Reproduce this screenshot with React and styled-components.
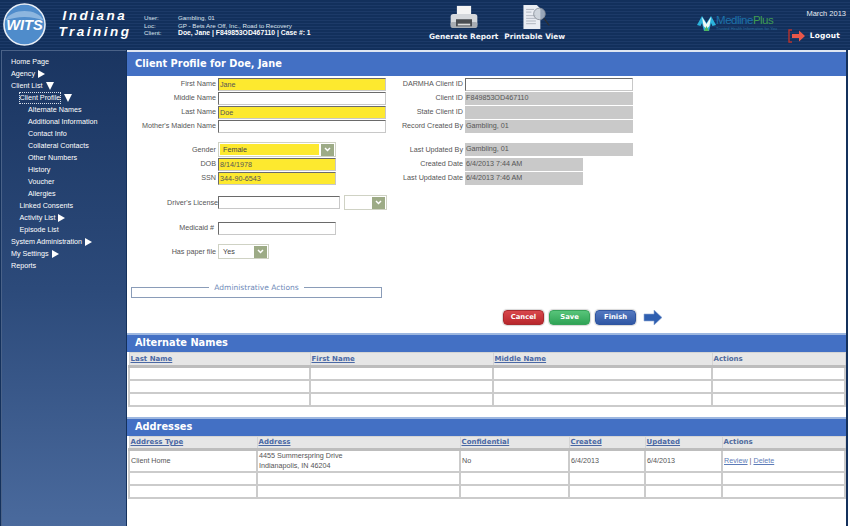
import React from "react";
import styled, { createGlobalStyle } from "styled-components";

const GlobalStyle = createGlobalStyle`
  html, body {
    margin: 0;
    padding: 0;
    height: 100%;
    background: #fff;
    font-family: "Liberation Sans", Arial, sans-serif;
    overflow: hidden;
  }
  * { box-sizing: border-box; }
`;

const Page = styled.div`
  width: 850px;
  height: 526px;
  display: flex;
  flex-direction: column;
  background: #14315c;
  overflow: hidden;
`;

const Header = styled.header`
  height: 50px;
  flex: none;
  display: flex;
  align-items: flex-start;
  background: repeating-linear-gradient(180deg, #12305c 0 2px, #1c3a68 2px 3px);
  color: #fff;
`;

const Logo = styled.svg`
  width: 43px;
  height: 43px;
  margin: 3px 0 0 3px;
  flex: none;
`;

const Brand = styled.div`
  width: 74px;
  margin: 8px 0 0 12px;
  flex: none;
  font: italic bold 13.5px/16px "Liberation Sans", Arial, sans-serif;
  letter-spacing: 2.5px;
  text-align: center;
`;

const Info = styled.div`
  width: 270px;
  margin: 14px 0 0 12px;
  flex: none;
  display: grid;
  grid-template-columns: 34px 1fr;
  font: 6.2px/7.5px "Liberation Sans", Arial, sans-serif;
  color: #dfe6f0;
`;

const InfoStrong = styled.span`
  font-size: 6.8px;
  font-weight: bold;
  color: #fff;
`;

const Tools = styled.div`
  margin: 5px 0 0 15px;
  display: flex;
  gap: 6px;
  flex: none;
`;

const Tool = styled.div`
  display: flex;
  flex-direction: column;
  align-items: center;
  font: bold 7.4px/10px "DejaVu Sans", sans-serif;
  color: #f2f4f8;
  white-space: nowrap;
`;

const ToolIcon = styled.svg`
  width: 30px;
  height: 24px;
  margin-bottom: 3px;
`;

const Medline = styled.div`
  margin: 14px 0 0 132px;
  display: flex;
  align-items: flex-start;
  flex: none;
`;

const MedlineMark = styled.svg`
  width: 19px;
  height: 18px;
`;

const MedlineWords = styled.div`
  font: 11.5px/12px "Liberation Sans", Arial, sans-serif;
  letter-spacing: -0.5px;
  color: #1d72aa;
`;

const MedlinePlus = styled.span`
  color: #3f9c50;
`;

const MedlineSub = styled.div`
  font-size: 4px;
  line-height: 5px;
  letter-spacing: 0;
  color: #2a6c9c;
`;

const Account = styled.div`
  margin: 9px 0 0 auto;
  padding-right: 4px;
  display: flex;
  flex-direction: column;
  align-items: flex-end;
  gap: 11px;
`;

const MonthLabel = styled.div`
  font: 7.5px/9px "Liberation Sans", Arial, sans-serif;
  color: #e6ebf2;
`;

const Logout = styled.div`
  display: flex;
  align-items: center;
  gap: 4px;
  padding-right: 6px;
  font: bold 7.4px/10px "DejaVu Sans", sans-serif;
  letter-spacing: 0.2px;
`;

const Body = styled.div`
  flex: 1;
  display: flex;
  min-height: 0;
`;

const Sidebar = styled.nav`
  width: 125px;
  flex: none;
  padding: 5px 0 0 9px;
  border-top: 1px solid #4a6288;
  border-left: 1px solid #4a6288;
  margin-left: 1px;
  background: linear-gradient(180deg, #1a3561 0%, #2c4a7a 50%, #4a6a9d 100%);
  color: #fff;
  font: 7.2px/12px "Liberation Sans", Arial, sans-serif;
`;

const NavItem = styled.div`
  height: 12px;
  display: flex;
  align-items: center;
  gap: 3px;
  padding-left: ${(p) => p.$level * 8.5}px;
  white-space: nowrap;
`;

const NavFocus = styled.span`
  border: 1px dotted #d8e0ea;
  line-height: 10px;
  margin-left: -1px;
`;

const ArrowRight = styled.i`
  width: 0;
  height: 0;
  border-top: 4px solid transparent;
  border-bottom: 4px solid transparent;
  border-left: 7px solid #fff;
`;

const ArrowDown = styled.i`
  width: 0;
  height: 0;
  border-left: 4px solid transparent;
  border-right: 4px solid transparent;
  border-top: 8px solid #fff;
`;

const Main = styled.main`
  width: 719px;
  margin-left: 1px;
  flex: none;
  background: #fff;
  border-top: 2px solid #dfe6f2;
  display: flex;
  flex-direction: column;
`;

const SectionBar = styled.h2`
  margin: 0;
  height: ${(p) => p.$h}px;
  padding: 0 0 1px 8px;
  display: flex;
  align-items: center;
  background: #4370c4;
  border-top: 2px solid #9db7e0;
  color: #fff;
  font: bold 9.8px/14px "DejaVu Sans", sans-serif;
`;

const TitleBar = styled(SectionBar)`
  border-top: 0;
`;

const Form = styled.div`
  display: grid;
  grid-template-columns: 259px 1fr;
  padding-top: 1px;
`;

const Column = styled.div`
  display: flex;
  flex-direction: column;
`;

const Row = styled.div`
  height: ${(p) => p.$h || 14}px;
  margin-top: ${(p) => p.$gap || 0}px;
  display: flex;
  align-items: center;
  gap: ${(p) => (p.$tight ? 0 : 2)}px;
  font: 7.2px/10px "Liberation Sans", Arial, sans-serif;
  color: #555;
`;

const Label = styled.label`
  width: ${(p) => p.$w}px;
  flex: none;
  text-align: right;
  white-space: nowrap;
`;

const Field = styled.div`
  width: ${(p) => p.$w || 168}px;
  height: 13px;
  flex: none;
  margin-left: ${(p) => p.$ml || 0}px;
  padding-left: 1px;
  line-height: 12px;
  font-size: 7.2px;
  color: #555;
  background: ${(p) => (p.$fill === "yellow" ? "#fde92f" : p.$fill === "grey" ? "#c9c9c9" : "#fff")};
  border: ${(p) => (p.$fill === "grey" ? "0" : "1px solid")};
  border-color: #6a6a6a #c8c8c8 #c8c8c8 #6a6a6a;
`;

const Select = styled.div`
  width: ${(p) => p.$w}px;
  height: ${(p) => p.$h || 15}px;
  flex: none;
  margin-left: ${(p) => p.$ml || 0}px;
  padding: 1px;
  display: flex;
  align-items: center;
  background: #fff;
  border: 1px solid #cfd2c4;
  font-size: 7.2px;
  color: #444;
`;

const SelectText = styled.span`
  flex: 1;
  height: 100%;
  padding-left: 3px;
  line-height: 11px;
  background: ${(p) => (p.$yellow ? "#fde92f" : "transparent")};
`;

const SelectButton = styled.span`
  width: 13px;
  height: 12px;
  flex: none;
  display: flex;
  align-items: center;
  justify-content: center;
  margin-left: 2px;
  background: #9dab86;
`;

const Chevron = styled.svg`
  width: 7px;
  height: 5px;
`;

const Fieldset = styled.fieldset`
  width: 251px;
  height: 15px;
  margin: 24px 0 0 4px;
  padding: 0;
  border: 1px solid #8a9cb8;
  min-width: 0;
`;

const Legend = styled.legend`
  margin: 0 auto;
  padding: 0 5px;
  font: 7.5px/9px "DejaVu Sans", sans-serif;
  color: #6f8ab8;
`;

const Actions = styled.div`
  height: 16px;
  margin-top: 11px;
  padding-left: 376px;
  display: flex;
  align-items: center;
  gap: 5px;
`;

const Btn = styled.button`
  width: 41px;
  height: 15px;
  padding: 0;
  border: 1px solid ${(p) => p.$edge};
  border-radius: 4px;
  background: linear-gradient(180deg, ${(p) => p.$light}, ${(p) => p.$color});
  box-shadow: 0 0 1px 1px #d8d8d8;
  color: #fff;
  font: bold 6.8px/12px "DejaVu Sans", sans-serif;
`;

const NextArrow = styled.svg`
  width: 20px;
  height: 15px;
  margin-left: 2px;
`;

const Section = styled.section`
  margin-top: ${(p) => p.$gap}px;
`;

const Table = styled.table`
  width: 718px;
  margin-left: 1px;
  border-collapse: collapse;
  table-layout: fixed;
`;

const Col = styled.col`
  width: ${(p) => (p.$w ? `${p.$w}px` : "auto")};
`;

const Th = styled.th`
  height: ${(p) => p.$h || 13}px;
  padding: 1px 0 0 1px;
  background: #e6e6e6;
  border: 1px solid #d4d4d4;
  border-bottom: 3px solid #bdbdbd;
  text-align: left;
  font: bold 7px/9px "DejaVu Sans", sans-serif;
  color: #4f6a9c;
`;

const HeadLink = styled.a`
  text-decoration: underline;
  color: #4a68a4;
`;

const Td = styled.td`
  height: ${(p) => p.$h || 13}px;
  padding: 0 0 0 1px;
  border: 2px solid #cbcbcb;
  font: 7.2px/10px "Liberation Sans", Arial, sans-serif;
  color: #555;
`;

const CellLink = styled.a`
  text-decoration: underline;
  color: #5d7cb8;
`;

const Rule = styled.div`
  width: 5px;
  flex: none;
  background: #fff;
  border-left: 2px solid #14315c;
`;

const Gap = styled.div`
  flex: 1;
  background: #fff;
`;

const NAV = [
  { t: "Home Page", l: 0 },
  { t: "Agency", l: 0, a: "r" },
  { t: "Client List", l: 0, a: "d" },
  { t: "Client Profile", l: 1, a: "d", focus: true },
  { t: "Alternate Names", l: 2 },
  { t: "Additional Information", l: 2 },
  { t: "Contact Info", l: 2 },
  { t: "Collateral Contacts", l: 2 },
  { t: "Other Numbers", l: 2 },
  { t: "History", l: 2 },
  { t: "Voucher", l: 2 },
  { t: "Allergies", l: 2 },
  { t: "Linked Consents", l: 1 },
  { t: "Activity List", l: 1, a: "r" },
  { t: "Episode List", l: 1 },
  { t: "System Administration", l: 0, a: "r" },
  { t: "My Settings", l: 0, a: "r" },
  { t: "Reports", l: 0 },
];

const ChevronIcon = () => (
  <Chevron viewBox="0 0 7 5">
    <path d="M1 1l2.5 2.5L6 1" fill="none" stroke="#fff" strokeWidth="1.5" />
  </Chevron>
);

function EmptyRows({ cols, rows }) {
  return Array.from({ length: rows }).map((_, r) => (
    <tr key={r}>
      {Array.from({ length: cols }).map((_, c) => (
        <Td key={c} />
      ))}
    </tr>
  ));
}

export default function App() {
  return (
    <Page>
      <GlobalStyle />
      <Header>
        <Logo viewBox="0 0 44 44">
          <circle cx="22" cy="22" r="21" fill="#4f8ccb" stroke="#e8eef6" strokeWidth="1.6" />
          <path d="M2.500 18C8 5 36 5 41.500 18C30 13 14 13 2.500 18Z" fill="#8db6df" />
          <text x="22" y="28" textAnchor="middle" fill="#fff" fontFamily="Liberation Sans" fontStyle="italic" fontWeight="bold" fontSize="15">WITS</text>
        </Logo>
        <Brand>
          Indiana
          <br />
          Training
        </Brand>
        <Info>
          <span>User:</span>
          <span>Gambling, 01</span>
          <span>Loc:</span>
          <span>GP - Bets Are Off, Inc., Road to Recovery</span>
          <span>Client:</span>
          <InfoStrong>Doe, Jane | F849853OD467110 | Case #: 1</InfoStrong>
        </Info>
        <Tools>
          <Tool>
            <ToolIcon viewBox="0 0 32 27">
              <rect x="8" y="1" width="16" height="10" fill="#f4f4f4" />
              <path d="M4 10h24a3 3 0 0 1 3 3v10H1V13a3 3 0 0 1 3-3z" fill="#d5d8dc" />
              <rect x="1" y="19" width="30" height="7" rx="2" fill="#a9adb3" />
              <rect x="7" y="16" width="18" height="8" fill="#4a4d52" />
              <rect x="9" y="21" width="14" height="2" fill="#dcdcdc" />
            </ToolIcon>
            Generate Report
          </Tool>
          <Tool>
            <ToolIcon viewBox="0 0 32 27">
              <path d="M3 0h15l4 4v23H3z" fill="#e9edf3" />
              <path d="M6 5h9M6 8h6M6 12h11M6 15h11M6 18h11M6 21h11" stroke="#a9b0ba" strokeWidth="1" />
              <circle cx="21" cy="10" r="6.500" fill="#c4ccd6" fillOpacity="0.75" stroke="#8b929c" />
              <path d="M26 15l6 8" stroke="#2c2f34" strokeWidth="1.4" />
            </ToolIcon>
            Printable View
          </Tool>
        </Tools>
        <Medline>
          <MedlineMark viewBox="0 0 19 18">
            <path d="M0 11L5 2l4.500 7L14 2l5 9-3.500 1L14 9l-2 8H7L5 9l-1.500 3z" fill="#2bb3dc" />
            <path d="M5 3l4.500 7L14 3l-1.500 9-3 3-3-3z" fill="#eef7f6" />
            <path d="M7 17l2.500-5 2.500 5z" fill="#4fb55a" />
          </MedlineMark>
          <MedlineWords>
            Medline<MedlinePlus>Plus</MedlinePlus>
            <MedlineSub>Trusted Health Information for You</MedlineSub>
          </MedlineWords>
        </Medline>
        <Account>
          <MonthLabel>March 2013</MonthLabel>
          <Logout>
            <svg width="18" height="14" viewBox="0 0 18 14">
              <path d="M4 1H1v12h3" fill="none" stroke="#b8322c" strokeWidth="1.4" />
              <path d="M4 5h7V1.500l6 5.500-6 5.500V9H4z" fill="#e8574a" />
            </svg>
            Logout
          </Logout>
        </Account>
      </Header>
      <Body>
        <Sidebar>
          {NAV.map((n) => (
            <NavItem key={n.t} $level={n.l}>
              {n.focus ? <NavFocus>{n.t}</NavFocus> : n.t}
              {n.a === "r" && <ArrowRight />}
              {n.a === "d" && <ArrowDown />}
            </NavItem>
          ))}
        </Sidebar>
        <Main>
          <TitleBar $h={24}>Client Profile for Doe, Jane</TitleBar>
          <Form>
            <Column>
              <Row><Label $w={89}>First Name</Label><Field $fill="yellow">Jane</Field></Row>
              <Row><Label $w={89}>Middle Name</Label><Field /></Row>
              <Row><Label $w={89}>Last Name</Label><Field $fill="yellow">Doe</Field></Row>
              <Row><Label $w={89}>Mother's Maiden Name</Label><Field /></Row>
              <Row $gap={9} $h={15}>
                <Label $w={89}>Gender</Label>
                <Select $w={118}>
                  <SelectText $yellow>Female</SelectText>
                  <SelectButton><ChevronIcon /></SelectButton>
                </Select>
              </Row>
              <Row><Label $w={89}>DOB</Label><Field $w={118} $fill="yellow">8/14/1978</Field></Row>
              <Row><Label $w={89}>SSN</Label><Field $w={118} $fill="yellow">344-90-6543</Field></Row>
              <Row $gap={10} $h={15} $tight>
                <Label $w={91}>Driver's License</Label>
                <Field $w={122} />
                <Select $w={43} $ml={4}>
                  <SelectText />
                  <SelectButton><ChevronIcon /></SelectButton>
                </Select>
              </Row>
              <Row $gap={11}><Label $w={87}>Medicaid #</Label><Field $w={118} $ml={2} /></Row>
              <Row $gap={9} $h={15}>
                <Label $w={89}>Has paper file</Label>
                <Select $w={51}>
                  <SelectText>Yes</SelectText>
                  <SelectButton><ChevronIcon /></SelectButton>
                </Select>
              </Row>
              <Fieldset>
                <Legend>Administrative Actions</Legend>
              </Fieldset>
            </Column>
            <Column>
              <Row><Label $w={77}>DARMHA Client ID</Label><Field /></Row>
              <Row><Label $w={77}>Client ID</Label><Field $fill="grey">F849853OD467110</Field></Row>
              <Row><Label $w={77}>State Client ID</Label><Field $fill="grey" /></Row>
              <Row><Label $w={77}>Record Created By</Label><Field $fill="grey">Gambling, 01</Field></Row>
              <Row $gap={9} $h={15}><Label $w={77}>Last Updated By</Label><Field $fill="grey">Gambling, 01</Field></Row>
              <Row><Label $w={77}>Created Date</Label><Field $w={118} $fill="grey">6/4/2013 7:44 AM</Field></Row>
              <Row><Label $w={77}>Last Updated Date</Label><Field $w={118} $fill="grey">6/4/2013 7:46 AM</Field></Row>
            </Column>
          </Form>
          <Actions>
            <Btn $color="#b8262c" $light="#d8484c" $edge="#a82a2e">Cancel</Btn>
            <Btn $color="#2fa456" $light="#58c47a" $edge="#37a35a">Save</Btn>
            <Btn $color="#2f57a4" $light="#5478c0" $edge="#2f55a0">Finish</Btn>
            <NextArrow viewBox="0 0 20 15">
              <path d="M1 4h10V0l8 7.500-8 7.500v-4H1z" fill="#2f5fb0" stroke="#8ea8d4" strokeWidth="0.6" />
            </NextArrow>
          </Actions>
          <Section $gap={8}>
            <SectionBar $h={19}>Alternate Names</SectionBar>
            <Table>
              <colgroup>
                <Col $w={181} /><Col $w={183} /><Col $w={219} /><Col />
              </colgroup>
              <thead>
                <tr>
                  <Th $h={14}><HeadLink>Last Name</HeadLink></Th>
                  <Th $h={14}><HeadLink>First Name</HeadLink></Th>
                  <Th $h={14}><HeadLink>Middle Name</HeadLink></Th>
                  <Th $h={14}>Actions</Th>
                </tr>
              </thead>
              <tbody>
                <EmptyRows cols={4} rows={3} />
              </tbody>
            </Table>
          </Section>
          <Section $gap={10}>
            <SectionBar $h={19}>Addresses</SectionBar>
            <Table>
              <colgroup>
                <Col $w={128} /><Col $w={203} /><Col $w={109} />
                <Col $w={76} /><Col $w={77} /><Col />
              </colgroup>
              <thead>
                <tr>
                  <Th><HeadLink>Address Type</HeadLink></Th>
                  <Th><HeadLink>Address</HeadLink></Th>
                  <Th><HeadLink>Confidential</HeadLink></Th>
                  <Th><HeadLink>Created</HeadLink></Th>
                  <Th><HeadLink>Updated</HeadLink></Th>
                  <Th>Actions</Th>
                </tr>
              </thead>
              <tbody>
                <tr>
                  <Td $h={23}>Client Home</Td>
                  <Td $h={23}>4455 Summerspring Drive<br />Indianapolis, IN 46204</Td>
                  <Td $h={23}>No</Td>
                  <Td $h={23}>6/4/2013</Td>
                  <Td $h={23}>6/4/2013</Td>
                  <Td $h={23}><CellLink>Review</CellLink> | <CellLink>Delete</CellLink></Td>
                </tr>
                <EmptyRows cols={6} rows={2} />
              </tbody>
            </Table>
          </Section>
          <Gap />
        </Main>
        <Rule />
      </Body>
    </Page>
  );
}
